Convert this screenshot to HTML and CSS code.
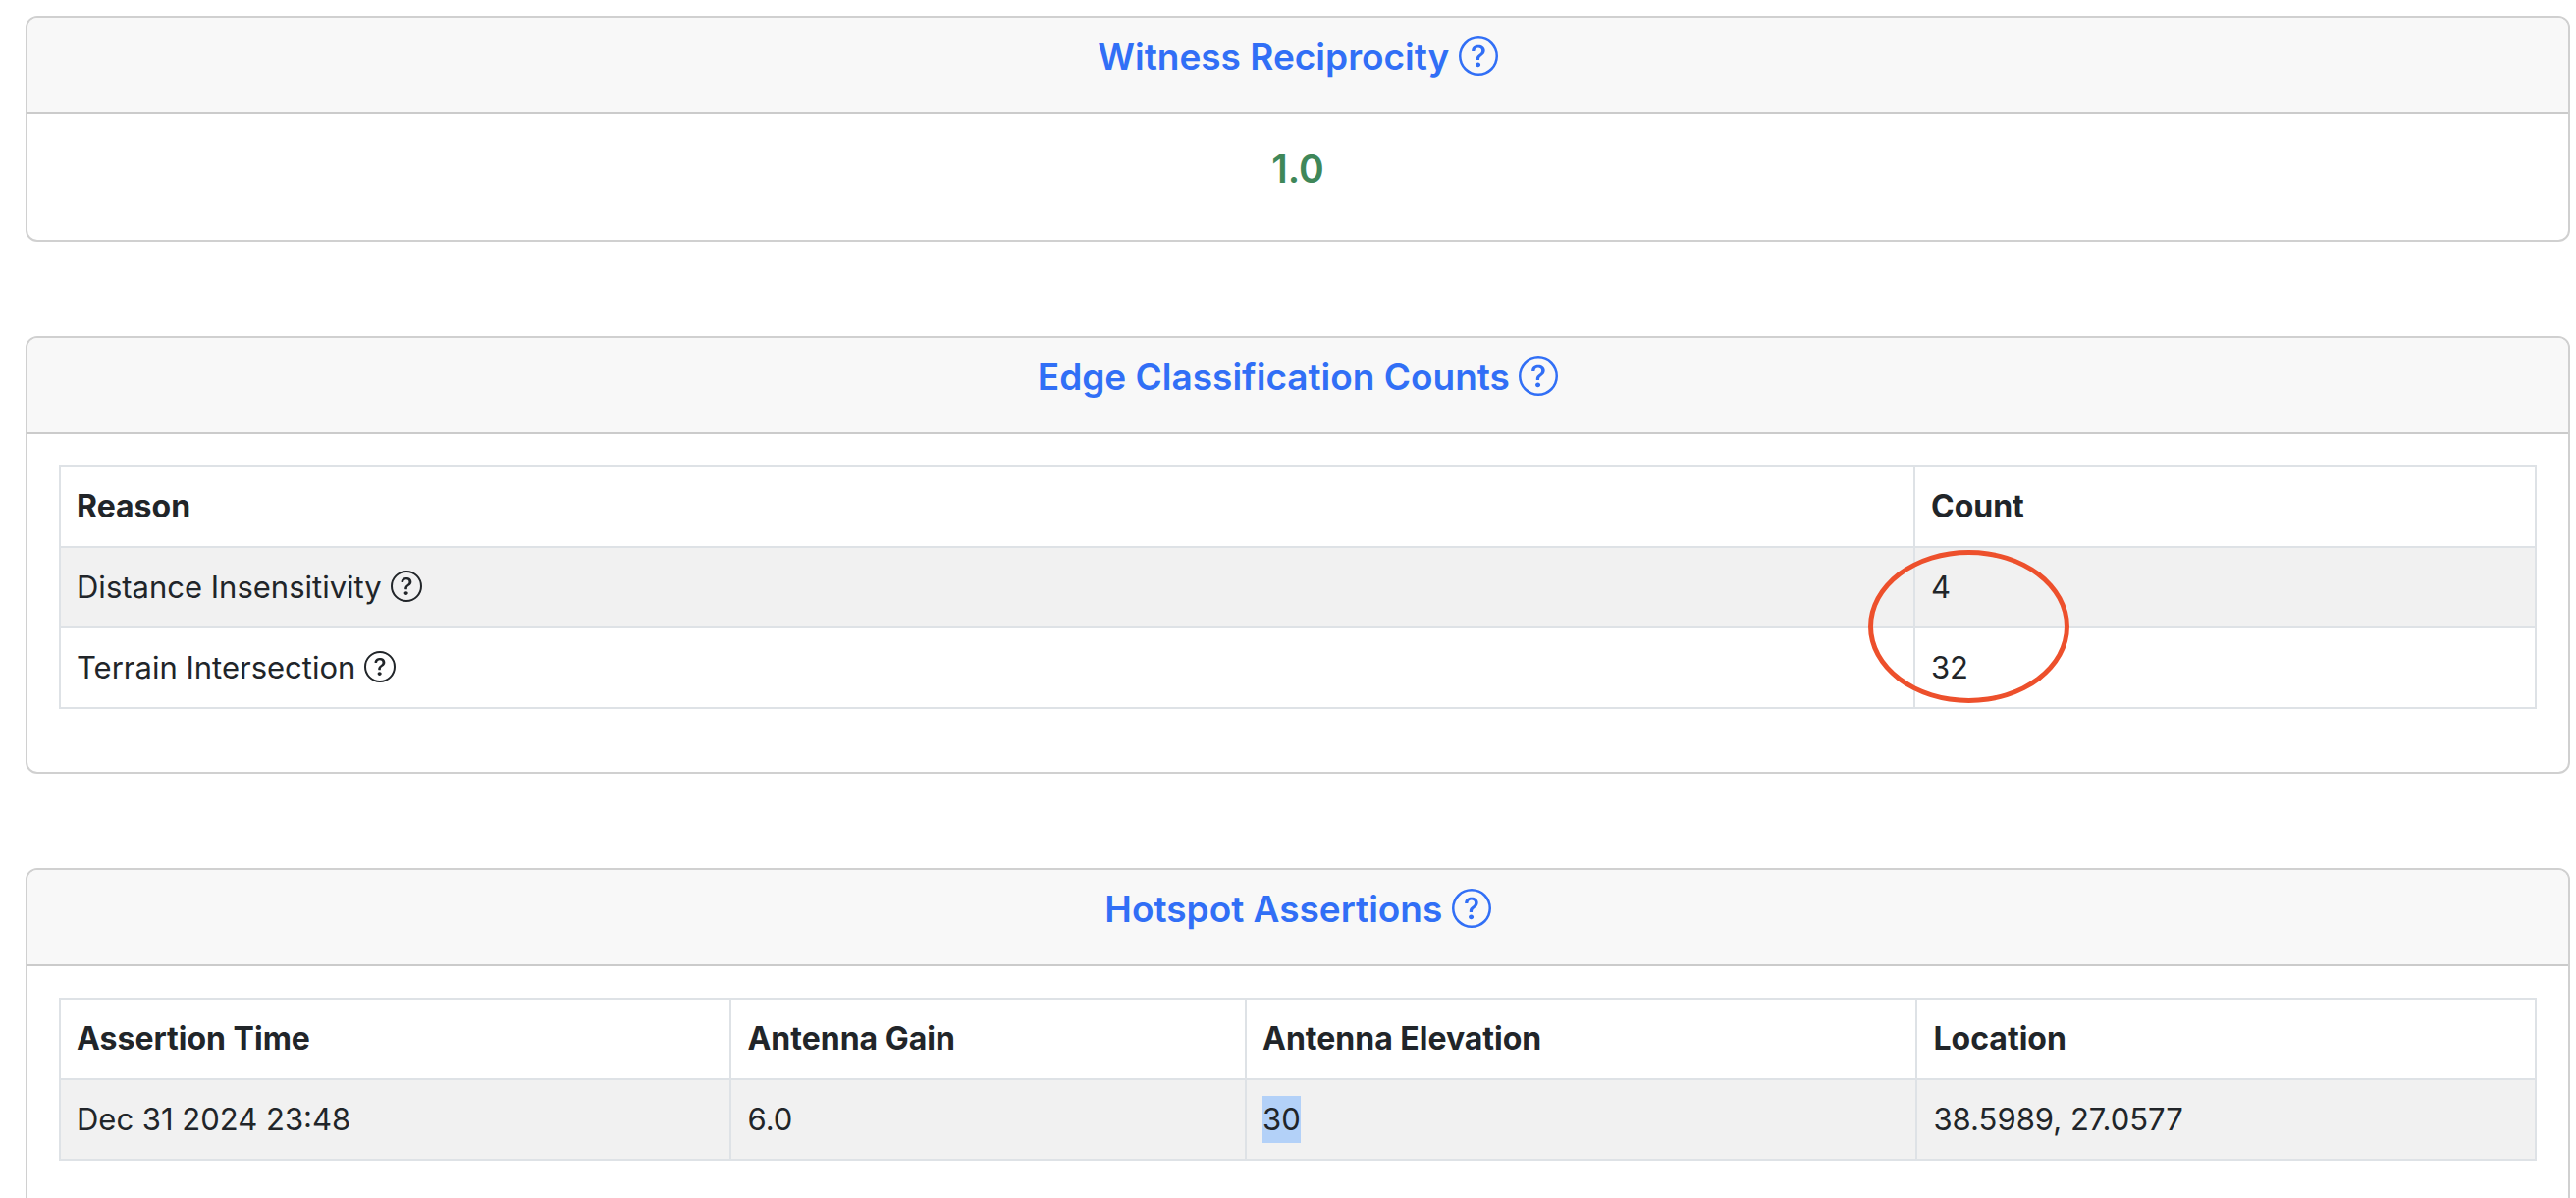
FILE: index.html
```html
<!DOCTYPE html>
<html lang="en">
<head>
<meta charset="utf-8">
<meta name="viewport" content="width=device-width, initial-scale=1">
<title>Hotspot Report</title>
<link rel="stylesheet" href="styles.css">
</head>
<body>
<svg class="sprite" aria-hidden="true">
  <symbol id="question-circle" viewBox="0 0 16 16">
    <path d="M8 15A7 7 0 1 1 8 1a7 7 0 0 1 0 14m0 1A8 8 0 1 0 8 0a8 8 0 0 0 0 16"/>
    <path d="M5.255 5.786a.237.237 0 0 0 .241.247h.825c.138 0 .248-.113.266-.25.09-.656.54-1.134 1.342-1.134.686 0 1.314.343 1.314 1.168 0 .635-.374.927-.965 1.371-.673.489-1.206 1.06-1.168 1.987l.003.217a.25.25 0 0 0 .25.246h.811a.25.25 0 0 0 .25-.25v-.105c0-.718.273-.927 1.01-1.486.609-.463 1.244-.977 1.244-2.056 0-1.511-1.276-2.241-2.673-2.241-1.267 0-2.655.59-2.75 2.286m1.557 5.763c0 .533.425.927 1.01.927.609 0 1.028-.394 1.028-.927 0-.552-.42-.94-1.029-.94-.584 0-1.009.388-1.009.94"/>
  </symbol>
</svg>
<main class="report">
  <section class="card">
    <header class="card-header">
      <h2 class="card-title">Witness Reciprocity <svg class="icon icon-lg"><use href="#question-circle"/></svg></h2>
    </header>
    <div class="card-body">
      <p class="score">1.0</p>
    </div>
  </section>

  <section class="card">
    <header class="card-header">
      <h2 class="card-title">Edge Classification Counts <svg class="icon icon-lg"><use href="#question-circle"/></svg></h2>
    </header>
    <div class="card-body">
      <table class="table">
        <colgroup><col class="col-reason"><col></colgroup>
        <thead>
          <tr><th scope="col">Reason</th><th scope="col">Count</th></tr>
        </thead>
        <tbody>
          <tr>
            <td>Distance Insensitivity <svg class="icon"><use href="#question-circle"/></svg></td>
            <td class="marked">4<span class="marker"></span></td>
          </tr>
          <tr>
            <td>Terrain Intersection <svg class="icon"><use href="#question-circle"/></svg></td>
            <td>32</td>
          </tr>
        </tbody>
      </table>
    </div>
  </section>

  <section class="card">
    <header class="card-header">
      <h2 class="card-title">Hotspot Assertions <svg class="icon icon-lg"><use href="#question-circle"/></svg></h2>
    </header>
    <div class="card-body">
      <table class="table">
        <colgroup><col class="col-wide"><col class="col-gain"><col class="col-wide"><col></colgroup>
        <thead>
          <tr>
            <th scope="col">Assertion Time</th>
            <th scope="col">Antenna Gain</th>
            <th scope="col">Antenna Elevation</th>
            <th scope="col">Location</th>
          </tr>
        </thead>
        <tbody>
          <tr>
            <td>Dec 31 2024 23:48</td>
            <td>6.0</td>
            <td><mark class="selected">30</mark></td>
            <td>38.5989, 27.0577</td>
          </tr>
        </tbody>
      </table>
    </div>
  </section>
</main>
</body>
</html>
```
FILE: styles.css
```css
* {
  box-sizing: border-box;
}

body {
  margin: 0;
  background: #fff;
  color: #212529;
  font-family: Inter, "Liberation Sans", sans-serif;
  font-size: 31px;
  line-height: 48px;
}

.sprite {
  display: none;
}

.report {
  display: flex;
  flex-direction: column;
  gap: 96px;
  padding: 16px 6px 16px 26px;
}

.card {
  border: 2px solid #d0d0d0;
  border-radius: 12px;
}

.card-header {
  padding: 16px 32px;
  background: #f8f8f8;
  border-bottom: 2px solid #cbcbcb;
  border-radius: 10px 10px 0 0;
}

.card-title,
.score {
  margin: 0 0 16px;
  font-weight: 600;
  line-height: 48px;
  text-align: center;
}

.card-title {
  color: #316ff6;
  font-size: 37px;
}

.score {
  color: #3f8759;
  font-size: 39px;
}

.card-body {
  padding: 32px;
}

.icon {
  width: 32px;
  height: 32px;
  fill: currentColor;
  vertical-align: -4px;
}

.icon-lg {
  width: 40px;
  height: 40px;
  vertical-align: -6px;
}

.table {
  width: 100%;
  margin: 0 0 32px;
  table-layout: fixed;
  border-collapse: collapse;
}

.table th,
.table td {
  padding: 16px;
  border: 2px solid #dee2e6;
  text-align: left;
}

.table th {
  font-size: 32px;
  font-weight: 700;
}

.table tbody tr:nth-child(odd) {
  background: #f1f1f1;
}

.col-reason {
  width: 74.9%;
}

.col-wide {
  width: 27.1%;
}

.col-gain {
  width: 20.8%;
}

.selected {
  display: inline-block;
  background: #b3d1f8;
  color: inherit;
}

.marked {
  position: relative;
}

/* Hand-drawn style ring around both counts */
.marker {
  position: absolute;
  top: 2px;
  left: -48px;
  width: 205px;
  height: 156px;
  border: 5px solid #ed502c;
  border-radius: 50%;
  pointer-events: none;
}
```
